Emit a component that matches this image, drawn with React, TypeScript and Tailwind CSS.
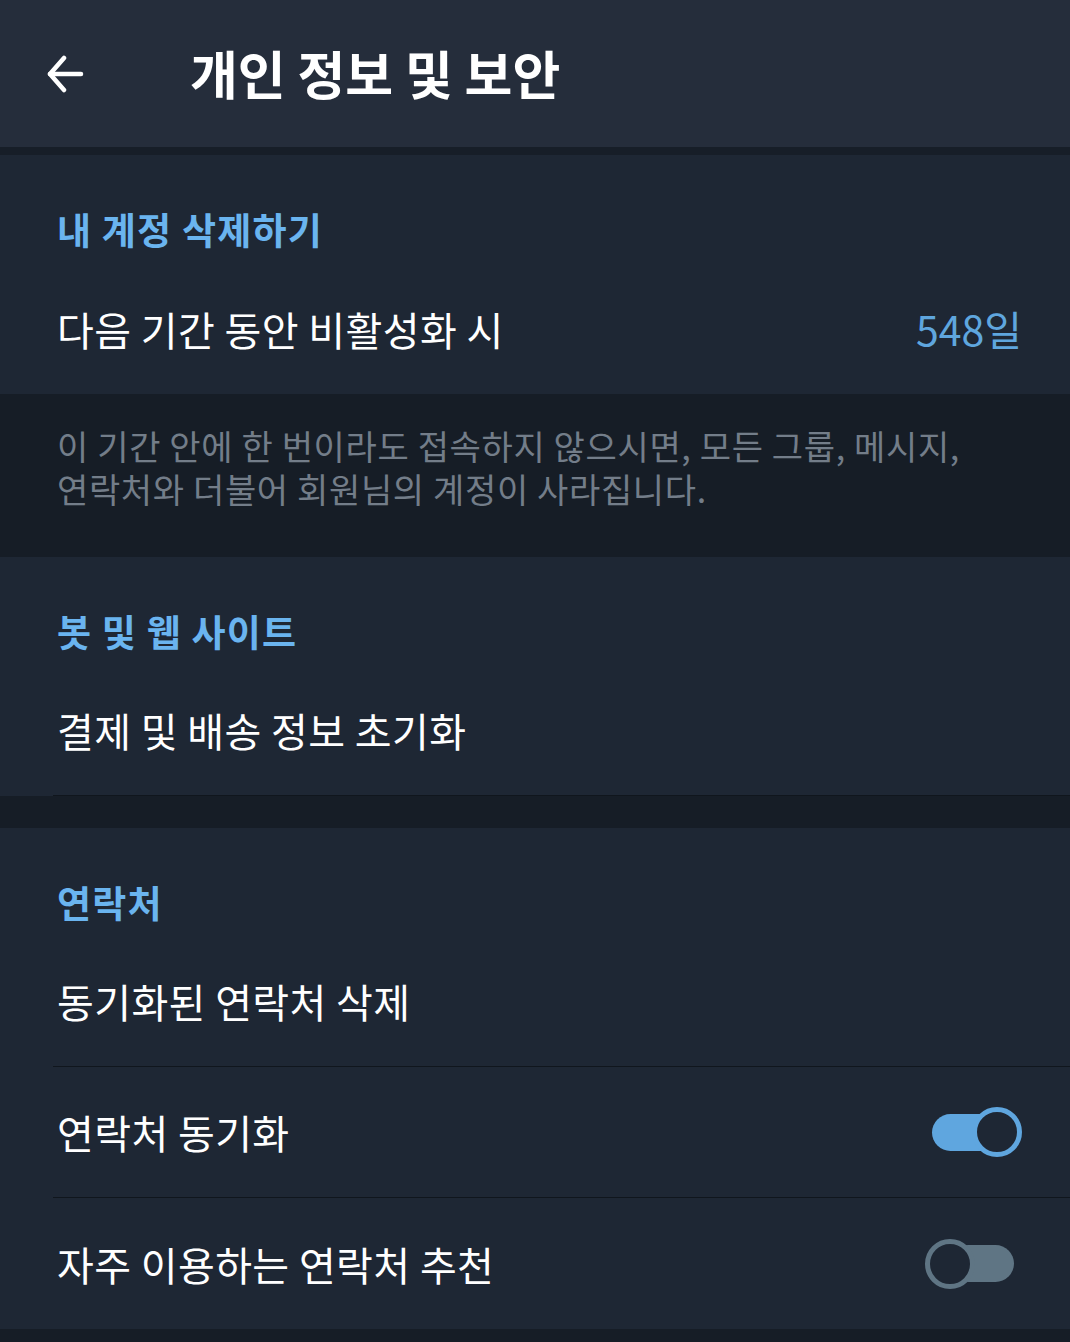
const FONT = { fontFamily: '"Noto Sans CJK KR", "Noto Sans", sans-serif' };

type Row = { label: string; value?: string; toggle?: 'on' | 'off' };

const Toggle = ({ on }: { on: boolean }) => (
    <div className="relative w-[92px] h-[52px] flex items-center">
        {on ? (
            <>
                <div className="absolute left-[2px] w-[68px] h-[37px] rounded-full bg-[#5fa6df]"></div>
                <div className="absolute right-0 w-[50px] h-[50px] rounded-full border-[5px] border-[#5fa6df] bg-[#1e2734]"></div>
            </>
        ) : (
            <>
                <div className="absolute right-[8px] w-[64px] h-[37px] rounded-full bg-[#5f7584]"></div>
                <div className="absolute left-[-5px] w-[50px] h-[50px] rounded-full border-[5px] border-[#5f7584] bg-[#1e2734]"></div>
            </>
        )}
    </div>
);

const SectionLabel = ({ text }: { text: string }) => (
    <div className="h-[108px] pt-[54px] pl-[57px]">
        <div className="text-[37px] leading-[40px] font-bold tracking-[1.2px] text-[#6ab4ef]">{text}</div>
    </div>
);

const SettingRow = ({ row, divider }: { row: Row; divider?: boolean }) => (
    <div className={`h-[131px] ml-[53px] pl-[4px] pr-[48px] flex items-center justify-between ${divider ? 'border-b border-[#10161d]' : ''}`}>
        <span className="text-[40px] tracking-[0.4px] text-white">{row.label}</span>
        {row.value && <span className="text-[41px] text-[#5fa6de]">{row.value}</span>}
        {row.toggle && <Toggle on={row.toggle === 'on'} />}
    </div>
);

export default function App() {
    return (
        <div className="w-[1070px] h-[1342px] bg-[#161d26] flex flex-col" style={FONT}>
            {/* Top bar */}
            <div className="h-[147px] bg-[#252d3b] flex items-center">
                <div className="w-[190px] pl-[47px] flex items-center">
                    <svg width="37" height="38" viewBox="0 0 37 38" fill="none" stroke="white" strokeWidth="4.5" strokeLinecap="round" strokeLinejoin="round">
                        <path d="M34 19H3" />
                        <path d="M17 3L3 19L17 35" />
                    </svg>
                </div>
                <h1 className="text-[52px] font-bold text-white leading-none pb-[2px]">개인 정보 및 보안</h1>
            </div>
            <div className="h-[8px] bg-[#171e28]"></div>

            {/* 내 계정 삭제하기 */}
            <div className="bg-[#1e2734]">
                <SectionLabel text="내 계정 삭제하기" />
                <SettingRow row={{ label: '다음 기간 동안 비활성화 시', value: '548일' }} />
            </div>
            <div className="h-[163px] bg-[#161d26] pt-[30px] pl-[57px] pr-[40px] flex flex-col">
                <span className="text-[34px] leading-[43px] tracking-[0.65px] text-[#737d89] whitespace-nowrap">
                    이 기간 안에 한 번이라도 접속하지 않으시면, 모든 그룹, 메시지,
                </span>
                <span className="text-[34px] leading-[43px] tracking-[0.65px] text-[#737d89] whitespace-nowrap">
                    연락처와 더불어 회원님의 계정이 사라집니다.
                </span>
            </div>

            {/* 봇 및 웹 사이트 */}
            <div className="bg-[#1e2734]">
                <SectionLabel text="봇 및 웹 사이트" />
                <SettingRow row={{ label: '결제 및 배송 정보 초기화' }} divider />
            </div>
            <div className="h-[32px] bg-[#161d26]"></div>

            {/* 연락처 */}
            <div className="bg-[#1e2734]">
                <SectionLabel text="연락처" />
                <SettingRow row={{ label: '동기화된 연락처 삭제' }} divider />
                <SettingRow row={{ label: '연락처 동기화', toggle: 'on' }} divider />
                <SettingRow row={{ label: '자주 이용하는 연락처 추천', toggle: 'off' }} />
            </div>
        </div>
    );
}
